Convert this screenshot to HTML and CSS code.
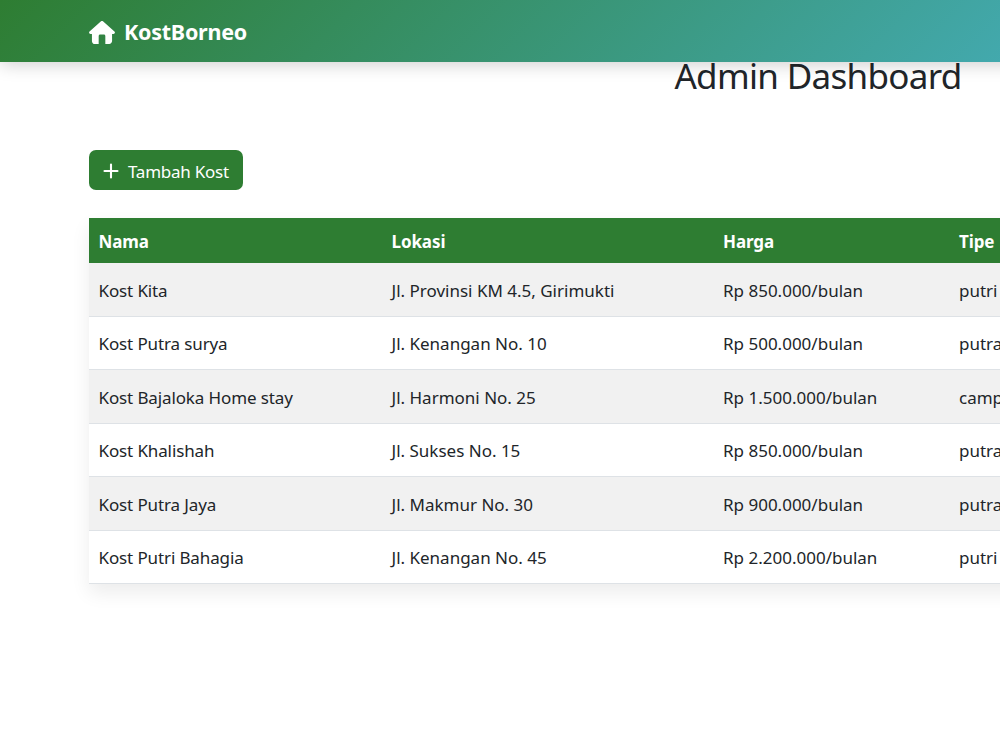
FILE: index.html
```
<!DOCTYPE html>
<html lang="id">
<head>
    <meta charset="UTF-8">
    <title>Admin Dashboard</title>
    <link rel="stylesheet" href="styles.css">
</head>
<body>
    <nav class="navbar">
        <a class="navbar-brand" href="#">
            <svg class="brand-icon" viewBox="0 0 576 512"><path fill="currentColor" d="M575.8 255.5c0 18-15 32.1-32 32.1h-32l.7 160.2c.2 35.5-28.500 64.200-64 64.200H362V330c0-17.700-14.300-32-32-32h-84c-17.700 0-32 14.300-32 32v182h-86c-35.300 0-64-28.700-64-64V287.600H32c-18 0-32-14-32-32.100 0-9 3-17 10-24L266.400 8c7-7 15-8 22-8s15 2 21 7l255.400 224.500c8 7 12 15 11 24z"/></svg>
            <span>KostBorneo</span>
        </a>
    </nav>
    <div class="container">
        <h2 class="title">Admin Dashboard</h2>
        <a class="btn-add" href="#">
            <svg class="plus-icon" viewBox="0 0 16 16"><path fill="none" stroke="currentColor" stroke-width="2.1" stroke-linecap="round" d="M8 1.500v13M1.500 8h13"/></svg>
            <span>Tambah Kost</span>
        </a>
        <table class="table">
            <thead>
                <tr>
                    <th class="col-nama">Nama</th>
                    <th class="col-lokasi">Lokasi</th>
                    <th class="col-harga">Harga</th>
                    <th>Tipe</th>
                </tr>
            </thead>
            <tbody>
                <tr>
                    <td class="nama">Kost Kita</td>
                    <td>Jl. Provinsi KM 4.5, Girimukti</td>
                    <td>Rp 850.000/bulan</td>
                    <td>putri</td>
                </tr>
                <tr>
                    <td class="nama">Kost Putra surya</td>
                    <td>Jl. Kenangan No. 10</td>
                    <td>Rp 500.000/bulan</td>
                    <td>putra</td>
                </tr>
                <tr>
                    <td class="nama">Kost Bajaloka Home stay</td>
                    <td>Jl. Harmoni No. 25</td>
                    <td>Rp 1.500.000/bulan</td>
                    <td>campur</td>
                </tr>
                <tr>
                    <td class="nama">Kost Khalishah</td>
                    <td>Jl. Sukses No. 15</td>
                    <td>Rp 850.000/bulan</td>
                    <td>putra</td>
                </tr>
                <tr>
                    <td class="nama">Kost Putra Jaya</td>
                    <td>Jl. Makmur No. 30</td>
                    <td>Rp 900.000/bulan</td>
                    <td>putra</td>
                </tr>
                <tr>
                    <td class="nama">Kost Putri Bahagia</td>
                    <td>Jl. Kenangan No. 45</td>
                    <td>Rp 2.200.000/bulan</td>
                    <td>putri</td>
                </tr>
            </tbody>
        </table>
    </div>
</body>
</html>
```
FILE: styles.css
```
* {
    box-sizing: border-box;
}

html {
    overflow: hidden;
}

body {
    margin: 0;
    width: 1636px;
    min-height: 100vh;
    background-color: #fff;
    color: #212529;
    font-family: "Segoe UI", "Noto Sans", sans-serif;
    font-size: 17px;
    line-height: 27px;
}

.navbar {
    position: relative;
    z-index: 1;
    display: flex;
    align-items: center;
    height: 62px;
    padding: 0 89px;
    background: linear-gradient(135deg, #2e7d32, #4fc3f7);
    box-shadow: 0 2px 17px rgba(0, 0, 0, 0.2);
}

.navbar-brand {
    display: flex;
    align-items: center;
    gap: 9px;
    padding-top: 2px;
    color: #fff;
    font-size: 21.5px;
    font-weight: 700;
    letter-spacing: -0.25px;
    text-decoration: none;
}

.brand-icon {
    width: 26px;
    height: 23px;
}

.navbar-brand span {
    margin-top: -2px;
}

.container {
    padding: 0 89px;
}

.title {
    margin: -4px 0 57px;
    font-size: 35px;
    font-weight: 400;
    letter-spacing: -0.7px;
    line-height: 35px;
    text-align: center;
}

.btn-add {
    display: inline-flex;
    align-items: center;
    gap: 9px;
    width: 154px;
    height: 40px;
    padding: 3px 13px 0 14px;
    border-radius: 7px;
    background-color: #2e7d32;
    color: #fff;
    letter-spacing: -0.25px;
    text-decoration: none;
    white-space: nowrap;
}

.plus-icon {
    flex-shrink: 0;
    width: 16px;
    height: 16px;
    margin-top: -1px;
}

.table {
    width: 100%;
    margin-top: 28px;
    table-layout: fixed;
    border-collapse: separate;
    border-spacing: 0;
    box-shadow: 0 9px 18px rgba(0, 0, 0, 0.075);
}

.table th,
.table td {
    padding: 0 9.5px;
    text-align: left;
    vertical-align: middle;
    white-space: nowrap;
}

.table th {
    height: 45px;
    padding-top: 2px;
    background-color: #2e7d32;
    color: #fff;
    font-weight: 700;
    letter-spacing: -0.1px;
}

.table td {
    height: 53.5px;
    padding-top: 2.4px;
    border-bottom: 1px solid #dee2e6;
    background-color: #fff;
}

.table .nama {
    letter-spacing: -0.12px;
}

.table tbody tr:nth-child(odd) td {
    background-color: #f1f1f1;
}

.col-nama {
    width: 293px;
}

.col-lokasi {
    width: 331.5px;
}

.col-harga {
    width: 236px;
}
```
